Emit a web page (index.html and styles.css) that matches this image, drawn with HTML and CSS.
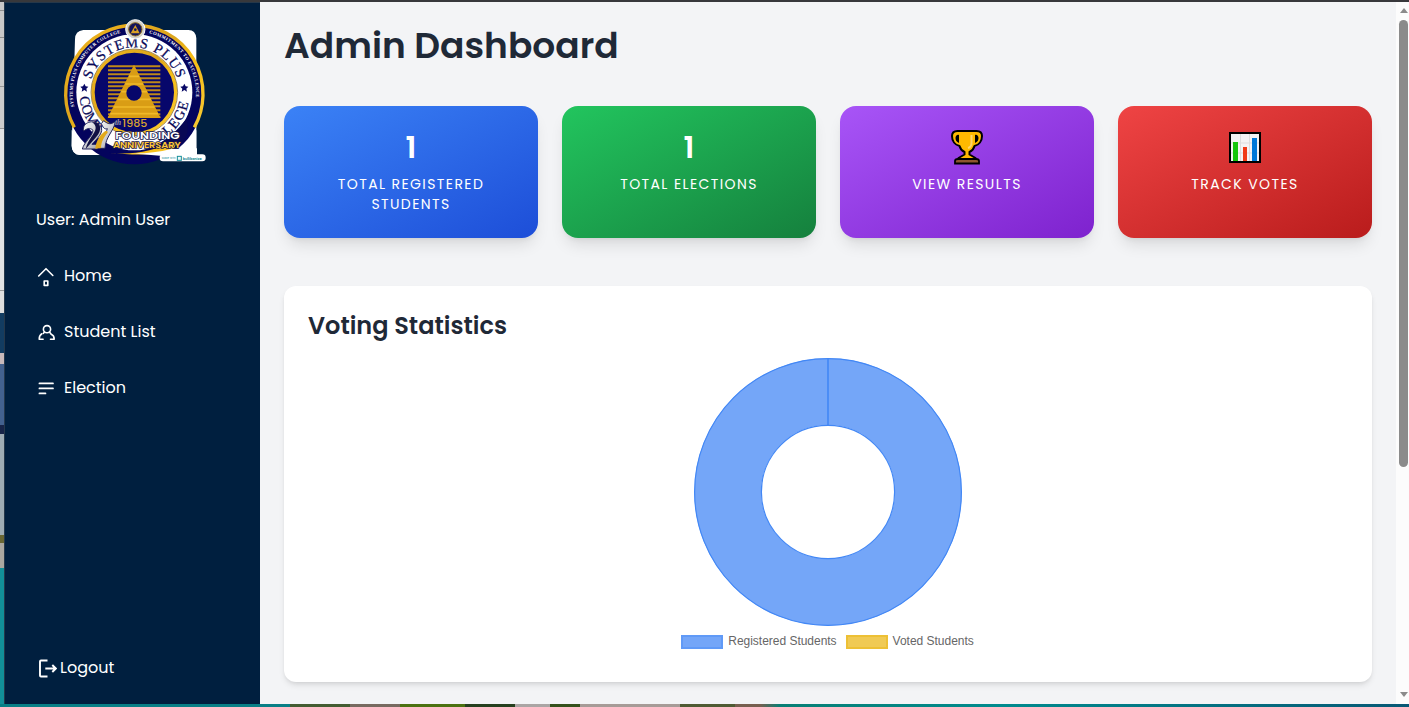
FILE: index.html
```html
<!DOCTYPE html>
<html lang="en">
<head>
<meta charset="utf-8">
<title>Admin Dashboard</title>
<link rel="stylesheet" href="styles.css">
</head>
<body>
<div class="desktop">
  <div class="window">
    <aside class="sidebar">
      <svg class="logo" viewBox="0 0 480 480" role="img" aria-label="Systems Plus Computer College">
        <defs>
          <linearGradient id="gold" x1="0" y1="0" x2="1" y2="1"><stop offset="0" stop-color="#f0b41c"/><stop offset=".45" stop-color="#dca51d"/><stop offset=".6" stop-color="#f6bd16"/><stop offset="1" stop-color="#f7c832"/></linearGradient>
          <linearGradient id="silver" x1="0" y1="0" x2="1" y2="1"><stop offset="0" stop-color="#fff"/><stop offset="1" stop-color="#9c9da5"/></linearGradient>
          <path id="ring-top" d="M103 247a135 135 0 0 1 270 0"/>
          <path id="ring-outer" d="M60 300a185 185 0 1 1 356 0"/>
          <path id="ring-left" d="M74 261a164 164 0 0 0 100 139"/>
          <path id="ring-right" d="M310 395a164 164 0 0 0 93-135"/>
        </defs>
        <path fill="#fff" d="M85 60H400q22 0 24 25V435H75q-25-3-25-28L60 88q0-25 25-28z"/>
        <circle cx="238" cy="256" r="207" fill="#04045d"/>
        <path fill="#fff" d="M50 360q30 42 60 73l-35 2q-25-3-25-28zM424 360q-18 38-54 75h54z"/>
        <path d="M58 352A206 206 0 1 1 418 352" fill="none" stroke="url(#gold)" stroke-width="10"/>
        <circle cx="238" cy="247" r="174" fill="#fff"/>
        <circle cx="238" cy="247" r="124" fill="#07076b" stroke="url(#gold)" stroke-width="10"/>
        <circle cx="238" cy="247" r="130" fill="none" stroke="#765716" stroke-width="2"/>
        <text class="seal-name arched"><textPath href="#ring-top" startOffset="50%">SYSTEMS PLUS</textPath></text>
        <text class="seal-motto"><textPath href="#ring-outer" startOffset="10" textLength="290">SYSTEMS PLUS COMPUTER COLLEGE</textPath></text>
        <text class="seal-motto"><textPath href="#ring-outer" startOffset="386" textLength="258">COMMITMENT TO EXCELLENCE</textPath></text>
        <text class="seal-name"><textPath href="#ring-left">COMP</textPath></text>
        <text class="seal-name"><textPath href="#ring-right" textLength="153">LLEGE</textPath></text>
        <path id="star" fill="#080866" d="M88 221l4 8 8 1-6 6 2 9-8-5-8 5 2-9-6-6 8-1z"/>
        <use href="#star" x="300"/>
        <path class="seal-lines" d="M159 169h157M159 181h157M159 193h157M159 205h157M159 217h157M159 229h157M159 241h157M159 253h157M159 265h157M159 277h157M159 289h157M159 301h157M159 313h157M159 321h157"/>
        <path d="M237 164L317 324H158z" fill="#d99d15"/>
        <path class="seal-shade" d="M222 199h30M211 222h53M199 245h77M188 268h100M176 291h123M166 311h143"/>
        <circle cx="237" cy="249" r="23" fill="#07076b"/>
        <text class="seal-year" x="202" y="350" textLength="75" lengthAdjust="spacingAndGlyphs">1985</text>
        <circle cx="241" cy="58" r="29" fill="#d5d2ca" stroke="#fff" stroke-width="3"/>
        <circle cx="241" cy="58" r="20" fill="#15145a" stroke="#8e6d26" stroke-width="3"/>
        <path d="M241 45l13 25h-27z" fill="#d9a024"/><circle cx="241" cy="59" r="4" fill="#17145a"/>
        <path d="M160 428c90 12 170-18 234-102 14 39-4 74-41 91-66 24-122 18-193 11z" fill="#080855"/>
        <path d="M160 428c73 9 132-5 205-35l-8 26c-62 19-119 16-197 9z" fill="url(#gold)"/>
        <path d="M225 430q65 2 123-13l78-2v22H315z" fill="#fff"/>
        <path d="M86 363c-7-25 31-39 50-16 14 19-11 40-25 56h22l-5 14H82c6-22 29-36 32-56-10-10-18-5-28 2z" fill="url(#silver)" stroke="#22235b" stroke-width="3"/>
        <path d="M111 337c32-3 30 28 10 47l-29 33c7-31 29-45 30-63 0-9-5-13-11-17z" fill="#111044"/>
        <path d="M139 341l7-9c21 18 29 4 35 3-4 29-29 43-31 80h-18c5-36 21-43 25-59-9 3-13-4-18-15z" fill="url(#silver)" stroke="#22235b" stroke-width="3"/>
        <path d="M158 368c-11 13-19 25-20 46l-17 2c2-28 20-48 31-53 5-1 6 1 6 5z" fill="#e2a91b"/>
        <text class="seal-th" x="180" y="346">th</text>
        <text class="seal-founding" x="181" y="388" textLength="193" lengthAdjust="spacingAndGlyphs">FOUNDING</text>
        <text class="seal-anniversary" x="174" y="413" textLength="203" lengthAdjust="spacingAndGlyphs">ANNIVERSARY</text>
        <rect x="314" y="433" width="138" height="21" rx="10" fill="#fff"/>
        <text class="maker" x="320" y="447" textLength="42">Made with</text>
        <rect x="367" y="439" width="12" height="12" fill="#eefaf9" stroke="#168d99" stroke-width="3"/>
        <text class="maker-brand" x="383" y="449" textLength="57">bullibonize</text>
      </svg>
      <p class="user">User: Admin User</p>
      <nav class="nav">
        <a class="link"><svg class="icon" viewBox="0 0.8 20 20"><path d="M2.700 10.800L10 3.500l6.800 6.800M8.200 15.800h3.600v4.400H8.200z"/></svg><span>Home</span></a>
        <a class="link"><svg class="icon" viewBox="0 0.5 20 20"><circle cx="11" cy="7.700" r="3.600"/><path d="M13.500 10.500l1.700 2.300q3 1.200 3 4.900h-3.700M5.900 12.300q-2.700 1.500-2.700 5.400h3.900M8.500 10.500l-1 1.300"/></svg><span>Student List</span></a>
        <a class="link"><svg class="icon lines" viewBox="0 0.6 20 20"><path d="M3.400 6h13.600M3.400 11h13.600M3.400 16h6.100"/></svg><span>Election</span></a>
      </nav>
      <a class="logout"><svg class="exit-icon" viewBox="0 0 21 21"><path d="M11.500 2.500H5q-1 0-1 1v14q0 1 1 1h6.500M9.300 10.500H19.500M16.300 7l3.500 3.500-3.500 3.500"/></svg><span>Logout</span></a>
    </aside>
    <main class="main">
      <h1 class="title">Admin Dashboard</h1>
      <section class="cards">
        <div class="card blue"><div class="count">1</div><div class="label">TOTAL REGISTERED<br>STUDENTS</div></div>
        <div class="card green"><div class="count">1</div><div class="label">TOTAL ELECTIONS</div></div>
        <div class="card purple">
          <div class="count"><svg class="emoji" viewBox="0 0 36 36"><path fill="#ffb900" stroke="#000" stroke-width="2" stroke-linejoin="round" d="M8.500 2h19C31 2 33 3.500 33 7c0 5-3 9-7.500 10-1 4-3 5-5 6v2.500l6 3.500v1h-17v-1l6-3.500V23c-2-1-4-2-5-6C6 16 3 12 3 7c0-3.500 2-5 5.500-5z"/><path fill="#000" d="M6.500 9c0-2.500 2-4 3.500-3v8c-2.500-1-3.500-3-3.500-5zm23 0c0-2.500-2-4-3.500-3v8c2.500-1 3.500-3 3.500-5z"/><path d="M22.500 6v8q0 4-3.500 5" fill="none" stroke="#ffd56b" stroke-width="2"/><path d="M6 34.500V32q0-2 3-2h18q3 0 3 2v2.500z" fill="#8d562e" stroke="#000" stroke-width="1.800"/></svg></div>
          <div class="label">VIEW RESULTS</div></div>
        <div class="card red">
          <div class="count"><svg class="emoji" viewBox="0 0 36 36"><path d="M3 4h30v29H3z" fill="#f5f3f4" stroke="#000" stroke-width="2"/><path d="M13.500 5v27M22.500 5v27M4 14h28M4 24h28" stroke="#ddd" fill="none"/><path fill="#16c60c" d="M6 13h5v19H6z"/><path fill="#f03a17" d="M16 18h4v14h-4z"/><path fill="#0078d7" d="M25 9h5v23h-5z"/></svg></div>
          <div class="label">TRACK VOTES</div></div>
      </section>
      <section class="panel">
        <h2 class="panel-title">Voting Statistics</h2>
        <svg class="chart" viewBox="0 0 268 268"><circle cx="134" cy="134" r="100.300" fill="none" stroke="#74a6f8" stroke-width="66.800"/><path d="M134 .5V67.500" class="arc seam"/><circle class="arc" cx="134" cy="134" r="133.400"/><circle class="arc" cx="134" cy="134" r="66.600"/></svg>
        <div class="legend"><i class="swatch sw-blue"></i><span class="lg-reg">Registered Students</span><i class="swatch sw-yellow"></i><span>Voted Students</span></div>
      </section>
    </main>
    <div class="scrollbar"><i class="arrow up"></i><i class="thumb"></i><i class="arrow down"></i></div>
  </div>
</div>
</body>
</html>
```
FILE: styles.css
```css
* { box-sizing: border-box; }
body { margin: 0; font-family: Poppins, Inter, "Noto Sans", sans-serif; overflow: hidden; }
.desktop {
  width: 1409px; height: 707px; padding: 2px 0 3px 4px;
  background:
    linear-gradient(#38383b, #38383b) 0 0 / 100% 2px no-repeat,
    linear-gradient(#c8c8c8 0 10px, #909090 10px 11px, #c8c8c8 11px 37px, #909090 37px 38px, #ccc 38px 86px, #999 86px 87px, #ccc 87px 128px, #999 128px 129px, #e0e2e4 129px 290px, #999 290px 291px, #dedede 291px 313px, #123c61 313px 353px, #c8b9bb 353px 364px, #43618e 364px 425px, #172448 425px 434px, #9eacb4 434px 535px, #686633 535px 543px, #aaa7a0 543px 568px, #128f98 568px) 0 0 / 4px 704px no-repeat,
    linear-gradient(90deg, #087f86 0 290px, #435c32 290px 350px, #776a60 350px 400px, #4b7211 400px 465px, #26401f 465px 515px, #aaa5a4 515px 550px, #34511c 550px 580px, #a69b97 580px 680px, #4f5b34 680px 735px, #775f4f 735px 760px, #087f75 780px, #008b8e 1000px, #075875 1409px) 0 704px / 100% 3px no-repeat;
}
.window { display: flex; height: 702px; background: #f3f4f6; }
.sidebar { width: 256px; background: #001f3f; color: #fff; display: flex; flex-direction: column; padding: 8px 32px 20px; font-size: 16px; line-height: 24px; box-shadow: inset 1px 1px #26384a; }
.logo { width: 160px; height: 160px; margin-left: 19px; flex: none; }
.user { margin: 38px 0 0; white-space: nowrap; }
.nav { display: flex; flex-direction: column; gap: 32px; margin-top: 32px; }
.link { display: flex; gap: 8px; align-items: center; height: 24px; white-space: nowrap; }
.icon { width: 20px; height: 20px; overflow: visible; fill: none; stroke: #fff; stroke-width: 1.6; stroke-linecap: round; stroke-linejoin: round; }
.lines { stroke-width: 1.7; }
.logout { margin-top: auto; margin-bottom: 4px; display: flex; gap: 3px; align-items: center; height: 24px; }
.exit-icon { width: 21px; height: 21px; fill: none; stroke: #fff; stroke-width: 1.9; }
.main { width: 1136px; padding: 24px 24px 0; }
.title { margin: 0 0 40px; height: 40px; font-size: 36px; line-height: 40px; font-weight: 600; color: #1f2937; }
.cards { display: grid; grid-template-columns: repeat(4, 254px); gap: 24px; }
.card { height: 132px; border-radius: 16px; padding: 23px 24px; color: #fff; text-align: center; box-shadow: 0 10px 15px -3px rgba(0,0,0,.1), 0 4px 6px -4px rgba(0,0,0,.1); }
.blue { background: linear-gradient(to bottom right, #3b82f6, #1d4ed8); }
.green { background: linear-gradient(to bottom right, #22c55e, #15803d); }
.purple { background: linear-gradient(to bottom right, #a855f7, #7e22ce); }
.red { background: linear-gradient(to bottom right, #ef4444, #b91c1c); }
.count { height: 36px; margin-bottom: 9px; font-size: 30px; line-height: 37px; font-weight: 600; }
.emoji { width: 36px; height: 36px; display: block; margin: 0 auto; }
.label { font-size: 14px; line-height: 20px; white-space: nowrap; letter-spacing: 1.4px; }
.panel { margin-top: 48px; height: 396px; background: #fff; border-radius: 12px; padding: 24px; box-shadow: 0 4px 6px -1px rgba(0,0,0,.1), 0 2px 4px -2px rgba(0,0,0,.1); }
.panel-title { margin: 0 0 16px; font-size: 24px; line-height: 32px; font-weight: 600; color: #1f2937; }
.chart { display: block; width: 268px; height: 268px; margin: 0 auto; overflow: visible; }
.arc { fill: none; stroke: #4287f5; stroke-width: 1.2; }
.seam { stroke-width: 1.6; }
.legend { display: flex; align-items: center; justify-content: center; height: 14px; margin-top: 8px; padding-right: 1px; color: #666; font: 12px/14px "Liberation Sans", Arial, sans-serif; letter-spacing: -.02px; white-space: nowrap; }
.swatch { width: 42px; height: 14px; margin: 2px 5px 0 0; }
.sw-blue { background: #74a6f8; border: 2px solid #609af7; }
.sw-yellow { background: #f0ca54; border: 2px solid #edc035; }
.lg-reg { margin-right: 9px; }
.scrollbar { width: 13px; background: #fcfcfc; display: flex; flex-direction: column; align-items: center; padding: 6px 0 7px 2px; }
.thumb { width: 9px; height: 447px; border-radius: 5px; background: #8b8b8b; margin-top: 7px; }
.arrow { border: 4.5px solid transparent; width: 0; height: 0; }
.up { border-top-width: 0; border-bottom: 5px solid #8b8b8b; }
.down { border-bottom-width: 0; border-top: 5px solid #8b8b8b; margin-top: auto; }
.seal-name { font: 43px "Liberation Serif", serif; fill: #080857; stroke: #080857; stroke-width: .7; }
.arched { text-anchor: middle; letter-spacing: 3px; }
.seal-motto { font: bold 14px "Liberation Serif", serif; fill: #fff; }
.seal-lines { stroke: #bf8919; stroke-width: 6; }
.seal-shade { stroke: #f0b928; stroke-width: 5; }
.seal-year { font: 500 29px Poppins, sans-serif; fill: #d9a331; }
.seal-th { font: italic bold 22px "Liberation Serif", serif; fill: #bdbec7; stroke: #262655; stroke-width: .7; }
.seal-founding { font: 600 30px Poppins, sans-serif; fill: #fff; stroke: #12134c; stroke-width: 4; paint-order: stroke; }
.seal-anniversary { font: 600 27px Poppins, sans-serif; fill: #ffc735; stroke: #12134c; stroke-width: 4; paint-order: stroke; }
.maker { font: 8px Inter, sans-serif; fill: #168d99; }
.maker-brand { font: bold 11px Inter, sans-serif; fill: #168d99; }
```
